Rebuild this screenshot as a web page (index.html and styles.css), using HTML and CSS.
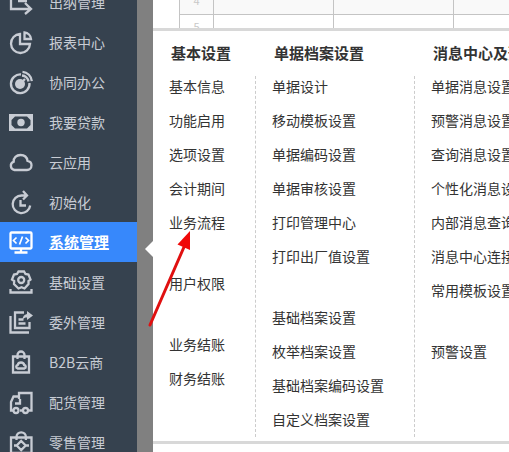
FILE: index.html
```html
<!DOCTYPE html>
<html lang="zh-CN">
	<head>
		<meta charset="utf-8">
		<meta name="viewport" content="width=device-width, initial-scale=1">
		<title>系统管理</title>
		<link rel="stylesheet" href="styles.css">
	</head>
	<body>

<nav class="sidebar">
	<a class="item" href="#">
		<svg class="icon" viewBox="0 0 24 24"><path d="M2 1v18h20M16 13l6 6-6 5M2 1h18v9M9 11h9"/></svg>
		<span>出纳管理</span>
	</a>
	<a class="item" href="#">
		<svg class="icon" viewBox="0 0 24 24"><path d="M11 4a9.5 9.5 0 1 0 10 10H11zM15.5 2.5V9H22a7 7 0 0 0-6.500-6.500z"/></svg>
		<span>报表中心</span>
	</a>
	<a class="item" href="#">
		<svg class="icon" viewBox="0 0 24 24"><path d="M12 4.500a9.300 9.300 0 1 0 8.500 8.500M13.500 1.800a10 10 0 0 1 9.300 9.300M13 5.500a7 7 0 0 1 6.500 6"/><circle class="solid" cx="11" cy="14" r="5"/><path d="M12 13l4-4"/></svg>
		<span>协同办公</span>
	</a>
	<a class="item" href="#">
		<svg class="icon" viewBox="0 0 24 24"><path class="solid" fill-rule="evenodd" d="M0 4h24v17H0zM6 6.500L2.500 10v5L6 18.500h12l3.500-3.500v-5L18 6.500z"/><circle class="solid" cx="12" cy="12.500" r="3.700"/></svg>
		<span>我要贷款</span>
	</a>
	<a class="item" href="#">
		<svg class="icon" viewBox="0 0 24 24"><path d="M5.500 20a4.300 4.300 0 0 1-.8-8.300C4.300 7.800 7.500 5 11.500 5c3.800 0 6.500 2.300 7 5.800 2.600.4 4 2.200 4 4.500 0 2.800-2 4.700-4.500 4.700z"/></svg>
		<span>云应用</span>
	</a>
	<a class="item" href="#">
		<svg class="icon" viewBox="0 0 24 24"><path d="M17 5.500h-4.500a8.800 8.800 0 1 0 8.700 10M14 1l4 4.500-4 4M11.500 10v5.500H17"/></svg>
		<span>初始化</span>
	</a>
	<a class="item active" href="#">
		<svg class="icon" viewBox="0 0 24 24"><rect x="1.500" y="2.500" width="21" height="16" rx="1"/><path d="M12 19v3M5.500 22.500h13"/><path class="thin" d="M7.500 7.500L4.500 10.500l3 3M16.500 7.500l3 3-3 3M13.500 6.500l-3 8"/></svg>
		<span>系统管理</span>
	</a>
	<a class="item" href="#">
		<svg class="icon" viewBox="0 0 24 24"><path d="M9.500 1.500h5.500l1.500 2.500 3 .5 2 5-2 1.500 0 3-4 4.500-3-1.200-3 1.200-4.500-4.500.2-3L3 9.500l2-5 3-.5z"/><circle cx="12.200" cy="10" r="3"/><path d="M1.500 19v3.500h21V19"/></svg>
		<span>基础设置</span>
	</a>
	<a class="item" href="#">
		<svg class="icon" viewBox="0 0 24 24"><path d="M15 2.500H6v15.500h14.500v-6M1.500 6v16.500H20M9.500 9.500h5M9.500 13.500h7"/><path class="solid" d="M18 1l6 4.500-6 4.500V7.500c-2 0-3 .5-4.500 2 .3-3 1.700-5 4.500-5.500z"/></svg>
		<span>委外管理</span>
	</a>
	<a class="item" href="#">
		<svg class="icon" viewBox="0 0 24 24"><path d="M4 6.500h16v16H4zM8.500 9V5a3.500 3.500 0 0 1 7 0v4"/><path d="M8.500 18.500a1.800 1.800 0 0 1 .2-3.500c.3-1.500 1.500-2.500 3.300-2.500s3 1 3.200 2.500a1.800 1.800 0 0 1 .3 3.500z"/></svg>
		<span>B2B云商</span>
	</a>
	<a class="item" href="#">
		<svg class="icon" viewBox="0 0 24 24"><path d="M4 20.500H2V12l2.500-5.500H10M10 9V3h12.500v17.500H20M11 20.500h2M6 13.500h5V9"/><circle cx="7" cy="20.500" r="2.500"/><circle cx="16.500" cy="20.500" r="2.500"/></svg>
		<span>配货管理</span>
	</a>
	<a class="item" href="#">
		<svg class="icon" viewBox="0 0 24 24"><path d="M2 7.500h20.500V23H2zM7.500 10V7a4.700 4.700 0 0 1 9.400 0v3"/><path d="M12.200 11l4.500 4.500-4.500 4.500-4.500-4.500zM5 15.500h3M17 15.500h3"/></svg>
		<span>零售管理</span>
	</a>
</nav>

<main class="content">
	<table class="sheet">
		<tr class="shade"><th>4</th><td></td><td></td><td></td></tr>
		<tr><th>5</th><td></td><td></td><td></td></tr>
	</table>

	<div class="menu">
		<section class="col">
			<h2>基本设置</h2>
			<div class="groups">
				<ul>
					<li><a href="#">基本信息</a></li>
					<li><a href="#">功能启用</a></li>
					<li><a href="#">选项设置</a></li>
					<li><a href="#">会计期间</a></li>
					<li><a href="#">业务流程</a></li>
				</ul>
				<ul>
					<li><a href="#">用户权限</a></li>
				</ul>
				<ul>
					<li><a href="#">业务结账</a></li>
					<li><a href="#">财务结账</a></li>
				</ul>
			</div>
		</section>
		<section class="col">
			<h2>单据档案设置</h2>
			<div class="groups">
				<ul>
					<li><a href="#">单据设计</a></li>
					<li><a href="#">移动模板设置</a></li>
					<li><a href="#">单据编码设置</a></li>
					<li><a href="#">单据审核设置</a></li>
					<li><a href="#">打印管理中心</a></li>
					<li><a href="#">打印出厂值设置</a></li>
				</ul>
				<ul>
					<li><a href="#">基础档案设置</a></li>
					<li><a href="#">枚举档案设置</a></li>
					<li><a href="#">基础档案编码设置</a></li>
					<li><a href="#">自定义档案设置</a></li>
				</ul>
			</div>
		</section>
		<section class="col">
			<h2>消息中心及预警设置</h2>
			<div class="groups">
				<ul>
					<li><a href="#">单据消息设置</a></li>
					<li><a href="#">预警消息设置</a></li>
					<li><a href="#">查询消息设置</a></li>
					<li><a href="#">个性化消息设置</a></li>
					<li><a href="#">内部消息查询</a></li>
					<li><a href="#">消息中心连接设置</a></li>
					<li><a href="#">常用模板设置</a></li>
				</ul>
				<ul>
					<li><a href="#">预警设置</a></li>
				</ul>
			</div>
		</section>
	</div>
</main>

<!-- pointer to 业务流程 -->
<svg class="pointer" viewBox="0 0 44 96"><path d="M2 94L36 16" stroke="#e01010" stroke-width="3" stroke-linecap="round"/><path d="M42 0L29.500 13.500l12.500 5.500z" fill="#f00808"/></svg>

	</body>
</html>
```

FILE: styles.css
```css
* { box-sizing: border-box; }

html, body {
	height: 100%;
}

body {
	display: flex;
	position: relative;
	margin: 0;
	overflow: hidden;
	background: #fff;
	color: #333;
	font: 14px/20px "Noto Sans CJK SC", sans-serif;
}

a {
	color: inherit;
	text-decoration: none;
}

ul {
	display: flex;
	flex-direction: column;
	gap: 14px;
	margin: 0;
	padding: 0;
	list-style: none;
}

/* sidebar, scrolled part way down */
.sidebar {
	flex: none;
	display: flex;
	flex-direction: column;
	margin-top: -18px;
	background: #36424f;
	border-right: 16px solid #808080;
}

.item {
	flex: none;
	display: flex;
	align-items: center;
	gap: 16px;
	height: 40px;
	padding: 0 28px 0 9px;
	color: #c8ccd4;
}

.item.active {
	background: #3788fb;
	color: #fff;
	font-size: 15px;
	font-weight: bold;
}

.item.active span {
	text-decoration: underline;
	text-decoration-thickness: 1px;
	text-underline-offset: 1px;
	text-decoration-skip-ink: none;
}

.icon {
	width: 24px;
	height: 24px;
	overflow: visible;
	fill: none;
	stroke: currentColor;
	stroke-width: 2.3;
}

.icon .solid {
	fill: currentColor;
	stroke: none;
}

.icon .thin {
	stroke-width: 1.7;
}

.content {
	flex: 1;
	min-width: 0;
	display: flex;
	flex-direction: column;
}

/* grid behind the menu */
.sheet {
	display: flex;
	flex-direction: column;
	height: 28px;
	padding-left: 26px;
	overflow: hidden;
}

.sheet tbody {
	display: block;
}

.sheet tr {
	display: flex;
}

.sheet th, .sheet td {
	flex: none;
	width: 120px;
	padding: 0;
	border-left: 1px solid #c4c4c4;
	border-bottom: 1px solid #c4c4c4;
}

.sheet th {
	width: 34px;
	height: 26px;
	color: #c8c8c8;
	font-size: 11px;
	line-height: 22px;
	font-weight: normal;
}

.sheet .shade {
	margin-top: -11px;
	background: #f9f9f9;
}

/* flyout menu */
.menu {
	position: relative;
	display: flex;
	padding-bottom: 4px;
	border-top: 3px solid #d8d8d8;
	border-bottom: 3px solid #d8d8d8;
	background: #fff;
	white-space: nowrap;
}

.menu:before {
	content: "";
	position: absolute;
	left: -8px;
	top: 210px;
	border: 8px solid transparent;
	border-left: 0;
	border-right-color: #fff;
}

.col {
	flex: none;
	display: flex;
	flex-direction: column;
}

.col h2 {
	margin: 0;
	padding: 0 0 2px 18px;
	font-size: 15px;
	line-height: 43px;
}

.groups {
	flex: 1;
	display: flex;
	flex-direction: column;
	gap: 41px;
	padding: 0 30px 8px 16px;
	border-right: 1px dashed #ccc;
}

.col:last-child {
	flex: 1;
	min-width: 0;
	overflow: hidden;
}

.col:last-child .groups {
	border-right: 0;
}

.pointer {
	position: absolute;
	left: 148px;
	top: 231px;
	width: 44px;
	height: 96px;
	fill: none;
}
```
